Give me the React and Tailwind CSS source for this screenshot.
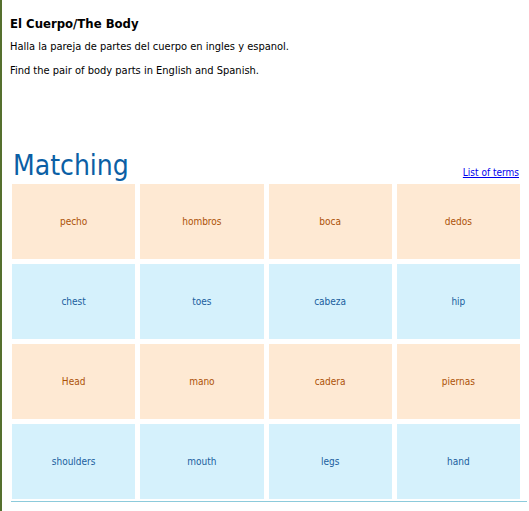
const TILES = [
  { text: 'pecho', lang: 'es' },
  { text: 'hombros', lang: 'es' },
  { text: 'boca', lang: 'es' },
  { text: 'dedos', lang: 'es' },
  { text: 'chest', lang: 'en' },
  { text: 'toes', lang: 'en' },
  { text: 'cabeza', lang: 'en' },
  { text: 'hip', lang: 'en' },
  { text: 'Head', lang: 'es' },
  { text: 'mano', lang: 'es' },
  { text: 'cadera', lang: 'es' },
  { text: 'piernas', lang: 'es' },
  { text: 'shoulders', lang: 'en' },
  { text: 'mouth', lang: 'en' },
  { text: 'legs', lang: 'en' },
  { text: 'hand', lang: 'en' },
];

export default function App() {
  return (
    <div className="w-[529px] h-[511px] bg-white border-l-2 border-[#55702e] font-['DejaVu_Sans_Condensed','DejaVu_Sans',Tahoma,sans-serif] overflow-hidden">
      <div className="pl-[8px] pt-[16px]">
        <h1 className="text-[13px] font-bold text-black leading-[16px]">El Cuerpo/The Body</h1>
        <p className="text-[11px] text-black mt-[8px] leading-[14px]">Halla la pareja de partes del cuerpo en ingles y espanol.</p>
        <p className="text-[11px] text-black mt-[10px] leading-[14px]">Find the pair of body parts in English and Spanish.</p>
      </div>

      <div className="pl-[10px] pr-[9px] mt-[73px]">
        <div className="flex items-end justify-between">
          <h2 className="text-[28px] leading-[30px] text-[#0b5fa5] pl-[1px]">Matching</h2>
          <a href="#" className="text-[10px] text-[#0000ee] underline mb-[1px] mr-[1px]">List of terms</a>
        </div>
        <div className="grid grid-cols-4 gap-x-[5px] gap-y-[5px] mt-[3px]">
          {TILES.map((t, i) => (
            <div
              key={i}
              className={`h-[75px] flex items-center justify-center text-[10px] ${
                t.lang === 'es' ? 'bg-[#fee9d3] text-[#ac5208]' : 'bg-[#d5f1fc] text-[#1a5e9e]'
              }`}
            >
              {t.text}
            </div>
          ))}
        </div>
        <div className="mt-[2px] border-t border-[#8ccadb] -mr-[7px] -ml-[1px]" />
      </div>
    </div>
  );
}
